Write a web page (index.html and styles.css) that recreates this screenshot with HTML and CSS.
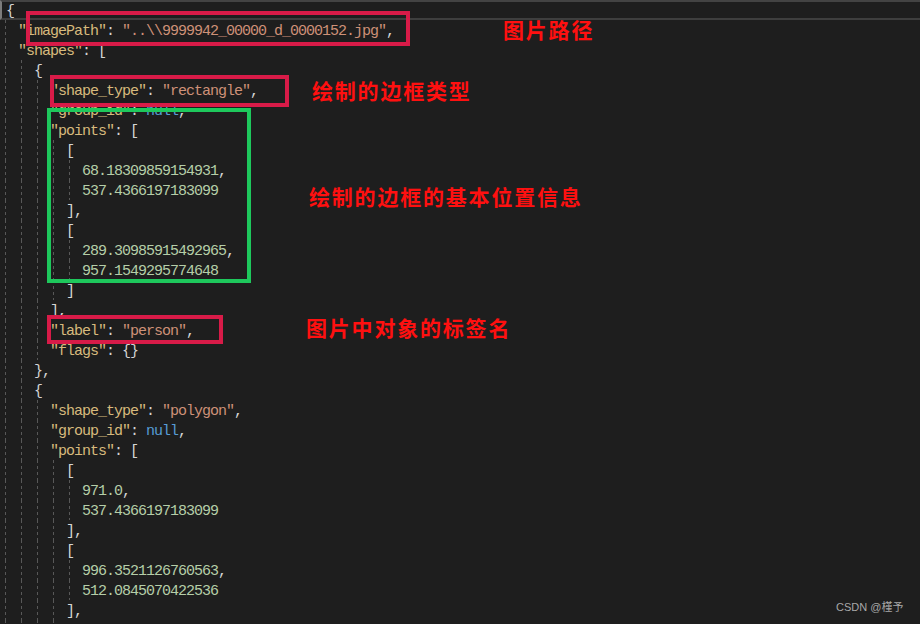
FILE: index.html
```html
<!DOCTYPE html>
<html lang="zh">
<head>
<meta charset="utf-8">
<title>labelme json</title>
<link rel="stylesheet" href="styles.css">
</head>
<body>
<div class="editor">
  <div class="code">
    <div class="l cur">{</div>
    <div class="l"><i></i><span class="k">"imagePath"</span>: <span class="s">"..\\9999942_00000_d_0000152.jpg"</span>,</div>
    <div class="l"><i></i><span class="k">"shapes"</span>: [</div>
    <div class="l"><i></i><i></i>{</div>
    <div class="l"><i></i><i></i><i></i><span class="k">"shape_type"</span>: <span class="s">"rectangle"</span>,</div>
    <div class="l"><i></i><i></i><i></i><span class="k">"group_id"</span>: <span class="b">null</span>,</div>
    <div class="l"><i></i><i></i><i></i><span class="k">"points"</span>: [</div>
    <div class="l"><i></i><i></i><i></i><i></i>[</div>
    <div class="l"><i></i><i></i><i></i><i></i><i></i><span class="n">68.18309859154931</span>,</div>
    <div class="l"><i></i><i></i><i></i><i></i><i></i><span class="n">537.4366197183099</span></div>
    <div class="l"><i></i><i></i><i></i><i></i>],</div>
    <div class="l"><i></i><i></i><i></i><i></i>[</div>
    <div class="l"><i></i><i></i><i></i><i></i><i></i><span class="n">289.30985915492965</span>,</div>
    <div class="l"><i></i><i></i><i></i><i></i><i></i><span class="n">957.1549295774648</span></div>
    <div class="l"><i></i><i></i><i></i><i></i>]</div>
    <div class="l"><i></i><i></i><i></i>],</div>
    <div class="l"><i></i><i></i><i></i><span class="k">"label"</span>: <span class="s">"person"</span>,</div>
    <div class="l"><i></i><i></i><i></i><span class="k">"flags"</span>: {}</div>
    <div class="l"><i></i><i></i>},</div>
    <div class="l"><i></i><i></i>{</div>
    <div class="l"><i></i><i></i><i></i><span class="k">"shape_type"</span>: <span class="s">"polygon"</span>,</div>
    <div class="l"><i></i><i></i><i></i><span class="k">"group_id"</span>: <span class="b">null</span>,</div>
    <div class="l"><i></i><i></i><i></i><span class="k">"points"</span>: [</div>
    <div class="l"><i></i><i></i><i></i><i></i>[</div>
    <div class="l"><i></i><i></i><i></i><i></i><i></i><span class="n">971.0</span>,</div>
    <div class="l"><i></i><i></i><i></i><i></i><i></i><span class="n">537.4366197183099</span></div>
    <div class="l"><i></i><i></i><i></i><i></i>],</div>
    <div class="l"><i></i><i></i><i></i><i></i>[</div>
    <div class="l"><i></i><i></i><i></i><i></i><i></i><span class="n">996.3521126760563</span>,</div>
    <div class="l"><i></i><i></i><i></i><i></i><i></i><span class="n">512.0845070422536</span></div>
    <div class="l"><i></i><i></i><i></i><i></i>],</div>
    <div class="l"><i></i><i></i><i></i><i></i>[</div>
  </div>

  <div class="box red box-path"></div>
  <div class="box red box-type"></div>
  <div class="box green box-points"></div>
  <div class="box red box-label"></div>

  <div class="note note-path">图片路径</div>
  <div class="note note-type">绘制的边框类型</div>
  <div class="note note-points">绘制的边框的基本位置信息</div>
  <div class="note note-label">图片中对象的标签名</div>

  <div class="mark">CSDN @槿予</div>
</div>
</body>
</html>
```

FILE: styles.css
```css
html, body {
  margin: 0;
  padding: 0;
  background: #1e1e1e;
}

.editor {
  position: relative;
  width: 920px;
  height: 624px;
  overflow: hidden;
  background: #1e1e1e;
}

.code {
  padding-left: 2px;
  font-family: "Liberation Mono", "DejaVu Sans Mono", monospace;
  font-size: 15px;
  letter-spacing: -1px;
  color: #d4d4d4;
}

.l {
  height: 20px;
  line-height: 23px;
  white-space: pre;
}

.cur {
  box-sizing: border-box;
  margin-left: -2px;
  border-left: 2px solid #7c7c7c;
  border-top: 2px solid #434343;
  border-bottom: 2px solid #3e3e3e;
  line-height: 19px;
  padding-left: 4px;
}

.l i {
  display: inline-block;
  width: 16px;
  height: 20px;
  vertical-align: top;
  background: repeating-linear-gradient(to bottom, #585858 0 3px, transparent 3px 6px) 3px 0 / 1px 100% no-repeat;
}

.k { color: #d7ba7d; }
.s { color: #ce9178; }
.n { color: #b5cea8; }
.b { color: #569cd6; }

.box {
  position: absolute;
  box-sizing: border-box;
  border: 4px solid;
}

.red { border-color: #d81b48; }
.green { border-color: #1ec85c; }

.box-path   { left: 26px; top: 11px;  width: 384px; height: 35px; }
.box-type   { left: 50px; top: 75px;  width: 239px; height: 32px; }
.box-points { left: 47px; top: 108px; width: 204px; height: 175px; }
.box-label  { left: 47px; top: 315px; width: 176px; height: 29px; }

.note {
  position: absolute;
  font-family: "Noto Sans CJK SC", "Noto Sans", sans-serif;
  font-weight: 700;
  font-size: 21px;
  line-height: 24px;
  letter-spacing: 1.8px;
  color: #ff1010;
  white-space: nowrap;
}

.note-path   { left: 503px; top: 17px; }
.note-type   { left: 312px; top: 78px; }
.note-points { left: 309px; top: 184px; }
.note-label  { left: 306px; top: 315px; }

.mark {
  position: absolute;
  left: 836px;
  top: 599px;
  font-family: "Liberation Sans", "Noto Sans CJK SC", sans-serif;
  font-size: 11px;
  line-height: 16px;
  color: #a8a8a8;
  white-space: nowrap;
}
```
